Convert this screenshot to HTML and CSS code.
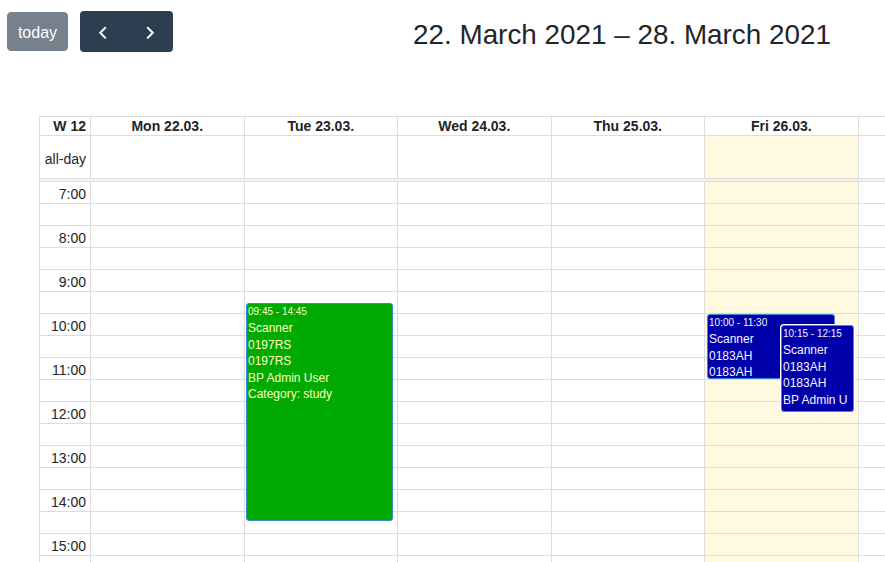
FILE: index.html
```html
<!DOCTYPE html>
<html>
<head>
<meta charset="utf-8">
<link rel="stylesheet" href="styles.css">
</head>
<body>
<div class="toolbar">
  <div class="chunk">
    <button class="btn today">today</button>
    <div class="group">
      <button class="btn nav" aria-label="prev"><svg width="24" height="24" viewBox="0 0 24 24"><polyline points="14.8,9.2 9.2,14.8 14.8,20.4" fill="none" stroke="#fff" stroke-width="2"/></svg></button>
      <button class="btn nav" aria-label="next"><svg width="24" height="24" viewBox="0 0 24 24"><polyline points="9.2,9.2 14.8,14.8 9.2,20.4" fill="none" stroke="#fff" stroke-width="2"/></svg></button>
    </div>
  </div>
  <h2 class="title">22. March 2021 – 28. March 2021</h2>
</div>

<div class="cal">
  <div class="head">
    <div class="cell axis">W 12</div>
    <div class="cell">Mon 22.03.</div>
    <div class="cell">Tue 23.03.</div>
    <div class="cell">Wed 24.03.</div>
    <div class="cell">Thu 25.03.</div>
    <div class="cell">Fri 26.03.</div>
    <div class="cell">Sat 27.03.</div>
    <div class="cell">Sun 28.03.</div>
  </div>
  <div class="allday">
    <div class="cell axis"><span class="allday-label">all-day</span></div>
    <div class="cell"></div>
    <div class="cell"></div>
    <div class="cell"></div>
    <div class="cell"></div>
    <div class="cell today-bg"></div>
    <div class="cell"></div>
    <div class="cell"></div>
  </div>
  <div class="divider"></div>
  <div class="body">
    <div class="rows">
      <div class="row"><span class="label">7:00</span></div>
      <div class="row"></div>
      <div class="row"><span class="label">8:00</span></div>
      <div class="row"></div>
      <div class="row"><span class="label">9:00</span></div>
      <div class="row"></div>
      <div class="row"><span class="label">10:00</span></div>
      <div class="row"></div>
      <div class="row"><span class="label">11:00</span></div>
      <div class="row"></div>
      <div class="row"><span class="label">12:00</span></div>
      <div class="row"></div>
      <div class="row"><span class="label">13:00</span></div>
      <div class="row"></div>
      <div class="row"><span class="label">14:00</span></div>
      <div class="row"></div>
      <div class="row"><span class="label">15:00</span></div>
      <div class="row"></div>
    </div>
    <div class="cols">
      <div class="col"></div>
      <div class="col"></div>
      <div class="col">
        <div class="event green" style="top:121px;height:218px;left:1.5px;right:4px">
          <div class="ev-time">09:45 - 14:45</div>
          <div class="ev-line">Scanner</div>
          <div class="ev-line">0197RS</div>
          <div class="ev-line">0197RS</div>
          <div class="ev-line">BP Admin User</div>
          <div class="ev-line">Category: study</div>
        </div>
      </div>
      <div class="col"></div>
      <div class="col"></div>
      <div class="col today-bg">
        <div class="event blue" style="top:132px;height:65px;left:2px;width:128px">
          <div class="ev-time">10:00 - 11:30</div>
          <div class="ev-line">Scanner</div>
          <div class="ev-line">0183AH</div>
          <div class="ev-line">0183AH</div>
        </div>
        <div class="event blue inset" style="top:143px;height:87px;left:76px;width:73px">
          <div class="ev-time">10:15 - 12:15</div>
          <div class="ev-line">Scanner</div>
          <div class="ev-line">0183AH</div>
          <div class="ev-line">0183AH</div>
          <div class="ev-line">BP Admin User</div>
        </div>
      </div>
      <div class="col"></div>
      <div class="col"></div>
    </div>
  </div>
</div>
</body>
</html>
```

FILE: styles.css
```css
html, body {
  margin: 0;
  padding: 0;
  overflow: hidden;
  height: 562px;
  background: #fff;
}
body {
  font-family: "Liberation Sans", Arial, sans-serif;
  color: #212529;
}
.toolbar {
  display: flex;
  align-items: flex-start;
  padding: 11px 0 0 7px;
  height: 41px;
  margin-bottom: 64px;
}
.chunk {
  display: flex;
  align-items: center;
  gap: 12px;
  height: 41px;
}
.btn {
  font-family: "Liberation Sans", Arial, sans-serif;
  font-size: 16px;
  color: #fff;
  border: 1px solid transparent;
  margin: 0;
  cursor: pointer;
}
.today {
  background: #76818d;
  border-color: #76818d;
  border-radius: 4px;
  height: 39px;
  width: 61px;
  padding: 3px 0 0;
  line-height: 24px;
}
.group {
  display: flex;
  background: #2c3e50;
  border-radius: 4px;
  height: 41px;
}
.nav {
  background: transparent;
  width: 46.5px;
  height: 41px;
  padding: 0;
  display: flex;
  align-items: center;
  justify-content: center;
}
.nav svg {
  display: block;
  margin-top: -3px;
}
.title {
  margin: 8px 0 0 240px;
  font-size: 27.85px;
  font-weight: normal;
  line-height: 32px;
  white-space: nowrap;
  color: #212529;
}
.cal {
  margin-left: 39px;
  width: 1126.5px;
  border-left: 1px solid #ddd;
  border-top: 1px solid #ddd;
  font-size: 14px;
}
.head, .allday, .cols {
  display: grid;
  grid-template-columns: 51px repeat(7, 153.5px);
}
.head {
  height: 18px;
  border-bottom: 1px solid #ddd;
}
.head .cell {
  font-weight: bold;
  text-align: center;
  line-height: 18px;
  overflow: hidden;
}
.head .axis {
  text-align: right;
  padding-right: 4px;
}
.cell {
  border-right: 1px solid #ddd;
  box-sizing: border-box;
  white-space: nowrap;
}
.allday {
  height: 42px;
}
.allday .axis {
  text-align: right;
  padding: 15px 4px 0 0;
  line-height: 16px;
}
.today-bg {
  background: rgba(255, 220, 40, 0.15);
}
.divider {
  height: 2px;
  border-top: 1px solid #ddd;
  border-bottom: 1px solid #ddd;
  background: rgba(208, 208, 208, 0.3);
}
.body {
  display: grid;
}
.body > .rows, .body > .cols {
  grid-area: 1 / 1;
}
.rows {
  display: flex;
  flex-direction: column;
}
.row {
  height: 21px;
  border-bottom: 1px solid #ddd;
  min-width: 1126.5px;
}
.label {
  display: block;
  width: 50px;
  box-sizing: border-box;
  text-align: right;
  padding: 4px 4px 0 0;
  line-height: 16px;
}
.col {
  border-right: 1px solid #ddd;
  position: relative;
}
.event {
  position: absolute;
  box-sizing: border-box;
  border: 1px solid #3788d8;
  border-radius: 3px;
  padding: 1px 1px 0;
  overflow: hidden;
  white-space: nowrap;
}
.ev-time, .ev-line {
  overflow: hidden;
  margin-right: 4px;
}
.green {
  background: #00aa00;
  color: #ffffc4;
}
.blue {
  background: #0000aa;
  color: #f4f4ff;
}
.inset {
  box-shadow: 0 0 0 1px #fff;
}
.ev-time {
  font-size: 10px;
  line-height: 14px;
  margin-bottom: 1px;
}
.ev-line {
  font-size: 12px;
  line-height: 16.6px;
}
```
